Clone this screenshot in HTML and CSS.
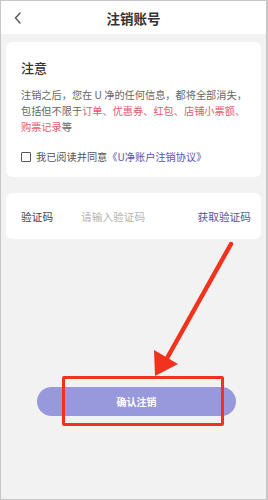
FILE: index.html
```html
<!DOCTYPE html>
<html lang="zh-CN">
<head>
    <meta charset="UTF-8">
    <meta name="viewport" content="width=device-width, initial-scale=1.0">
    <title>注销账号</title>
    <link rel="stylesheet" href="styles.css">
</head>
<body>
    <div class="screen">
        <div class="topbar">
            <svg class="back" width="10" height="14" viewBox="0 0 10 14">
                <path d="M7 2 L2.5 7 L7 12" fill="none" stroke="#555" stroke-width="1.4" stroke-linecap="round" stroke-linejoin="round"/>
            </svg>
            <h1>注销账号</h1>
        </div>

        <div class="card notice">
            <h2>注意</h2>
            <p class="desc">注销之后，您在 U 净的任何信息，都将全部消失，<br>包括但不限于<span class="hl">订单、优惠券、红包、店铺小票额、<br>购票记录</span>等</p>
            <label class="agree">
                <span class="box"></span>
                <span>我已阅读并同意<span class="link">《U净账户注销协议》</span></span>
            </label>
        </div>

        <div class="card code-row">
            <span class="code-label">验证码</span>
            <span class="code-input">请输入验证码</span>
            <span class="code-get">获取验证码</span>
        </div>

        <div class="actions">
            <button class="confirm">确认注销</button>
        </div>

        <!-- annotation drawn over the screenshot -->
        <div class="mark-box"></div>
        <svg class="mark-arrow" width="268" height="500" viewBox="0 0 268 500">
            <line x1="231" y1="244" x2="166" y2="360" stroke="#f2321c" stroke-width="4.5" stroke-linecap="round"/>
            <polygon points="155,376 154,350 178,364" fill="#f2321c"/>
        </svg>
    </div>
</body>
</html>
```

FILE: styles.css
```css
* {
    box-sizing: border-box;
}
body {
    margin: 0;
    font-family: "Noto Sans CJK SC", "Noto Sans", sans-serif;
    background-color: #f2f2f2;
}
.screen {
    position: relative;
    width: 268px;
    height: 500px;
    background-color: #f2f2f2;
    border: 1px solid #c6c6c6;
    border-right-width: 2px;
    overflow: hidden;
}
.topbar {
    position: relative;
    height: 33px;
    background-color: #fff;
    display: flex;
    align-items: center;
    justify-content: center;
}
.back {
    position: absolute;
    left: 12px;
    top: 10px;
}
.topbar h1 {
    margin: 0;
    font-size: 13.5px;
    font-weight: bold;
    color: #333;
}
.card {
    margin: 8px 5px 0;
    background-color: #fff;
    border-radius: 6px;
}
.notice {
    padding: 17px 4px 12px 15px;
    height: 135px;
}
.notice h2 {
    margin: 0;
    font-size: 13px;
    font-weight: 500;
    color: #333;
    line-height: 18px;
}
.desc {
    margin: 10px 0 0;
    font-size: 10.2px;
    line-height: 16px;
    color: #666;
    white-space: nowrap;
}
.hl {
    color: #e25b6b;
}
.agree {
    display: flex;
    align-items: center;
    gap: 5px;
    margin-top: 14px;
    font-size: 10.2px;
    color: #555;
}
.box {
    width: 10px;
    height: 10px;
    border: 1px solid #555;
    border-radius: 1px;
}
.link {
    color: #5b54b4;
}
.code-row {
    margin-top: 16px;
    height: 46px;
    padding: 0 10px 0 15px;
    display: flex;
    align-items: center;
    font-size: 10.7px;
}
.code-label {
    width: 60px;
    color: #444;
}
.code-input {
    flex: 1;
    color: #b4b4b4;
}
.code-get {
    color: #56568f;
}
.actions {
    padding: 148px 0 0 36px;
}
.confirm {
    width: 199px;
    height: 29px;
    border: none;
    border-radius: 15px;
    background-color: #9898dc;
    color: #fff;
    font-family: inherit;
    font-size: 10px;
    font-weight: bold;
}
.mark-box {
    position: absolute;
    left: 61px;
    top: 375px;
    width: 162px;
    height: 50px;
    border: 3px solid #f2321c;
    border-radius: 2px;
}
.mark-arrow {
    position: absolute;
    left: -1px;
    top: -1px;
}
```
